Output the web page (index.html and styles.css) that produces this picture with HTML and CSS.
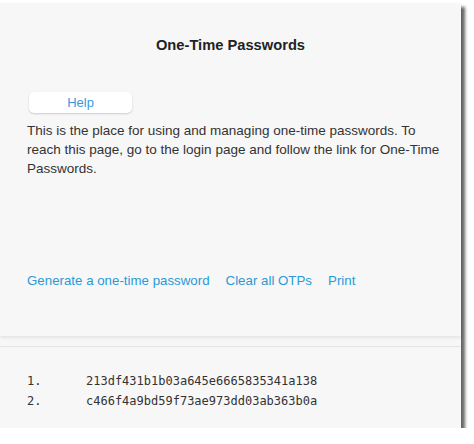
FILE: index.html
```html
<!DOCTYPE html>
<html lang="en">
<head>
  <meta charset="UTF-8">
  <title>One-Time Passwords</title>
  <meta name="viewport" content="width=device-width, initial-scale=1.0">
  <link rel="stylesheet" href="styles.css">
</head>
<body>
  <div class="panel">
    <div class="top">
      <h2>One-Time Passwords</h2>
      <button class="help-btn" type="button">Help</button>
      <p class="intro">This is the place for using and managing one-time passwords. To reach this page, go to the login page and follow the link for One-Time Passwords.</p>
      <div class="actions">
        <a href="#">Generate a one-time password</a>
        <a href="#">Clear all OTPs</a>
        <a href="#">Print</a>
      </div>
    </div>
    <ol class="otp-list">
      <li><span class="num">1.</span>213df431b1b03a645e6665835341a138</li>
      <li><span class="num">2.</span>c466f4a9bd59f73ae973dd03ab363b0a</li>
    </ol>
  </div>
</body>
</html>
```

FILE: styles.css
```css
body { margin:0; background:#fff; font-family:'Liberation Sans',Arial,sans-serif; color:#333; }
.panel { width:461px; height:425px; margin-top:3px; background:#f7f7f7; box-shadow:4px 4px 3px rgba(0,0,0,0.6); display:flex; flex-direction:column; }
.top { height:333px; padding:0 18px 0 27px; box-shadow:0 2px 3px rgba(0,0,0,0.08); display:flex; flex-direction:column; }
h2 { margin:34px 9px 0 0; text-align:center; font-size:14.7px; line-height:17px; color:#222; }
.help-btn { margin:38px 0 0 2px; width:103px; height:21px; padding:0; background:#fff; border:none; border-radius:5px; box-shadow:0 1px 2px rgba(0,0,0,0.18); color:#3a9ad9; font-family:inherit; font-size:13px; }
.intro { margin:8px 0 0; font-size:13.5px; line-height:19px; }
.actions { margin-top:auto; margin-bottom:46px; display:flex; gap:16px; font-size:13.3px; line-height:19px; }
.actions a { color:#2a9ad6; text-decoration:none; }
.otp-list { list-style:none; margin:10px 0 0; padding:24px 27px 0; border-top:1px solid #e4e4e4; flex:1; font-family:'DejaVu Sans Mono',Consolas,monospace; font-size:12px; line-height:20px; color:#333; }
.num { display:inline-block; width:59px; }
```
